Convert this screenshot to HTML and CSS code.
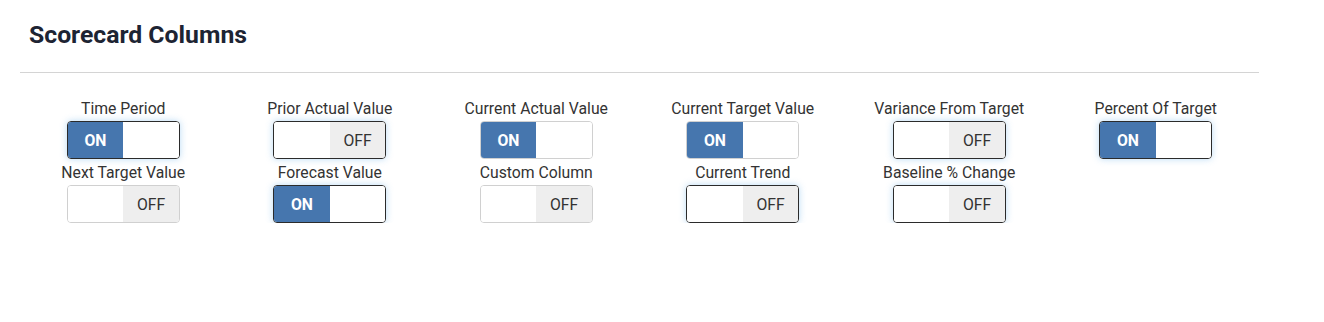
FILE: index.html
```html
<!DOCTYPE html>
<html>
<head>
    <title>Scorecard Columns</title>
    <link rel="stylesheet" href="styles.css">
</head>
<body>
    <div id="container">
        <h1 class="titulo">Scorecard Columns</h1>
        <hr class="divisor">

        <div class="grade">
            <div class="campo">
                <label>Time Period</label>
                <div class="chave ligada focada"><span class="lado-on">ON</span><span class="lado-vazio"></span></div>
            </div>
            <div class="campo">
                <label>Prior Actual Value</label>
                <div class="chave focada"><span class="lado-vazio"></span><span class="lado-off">OFF</span></div>
            </div>
            <div class="campo">
                <label>Current Actual Value</label>
                <div class="chave ligada"><span class="lado-on">ON</span><span class="lado-vazio"></span></div>
            </div>
            <div class="campo">
                <label>Current Target Value</label>
                <div class="chave ligada"><span class="lado-on">ON</span><span class="lado-vazio"></span></div>
            </div>
            <div class="campo">
                <label>Variance From Target</label>
                <div class="chave focada"><span class="lado-vazio"></span><span class="lado-off">OFF</span></div>
            </div>
            <div class="campo">
                <label>Percent Of Target</label>
                <div class="chave ligada focada"><span class="lado-on">ON</span><span class="lado-vazio"></span></div>
            </div>

            <div class="campo">
                <label>Next Target Value</label>
                <div class="chave"><span class="lado-vazio"></span><span class="lado-off">OFF</span></div>
            </div>
            <div class="campo">
                <label>Forecast Value</label>
                <div class="chave ligada focada"><span class="lado-on">ON</span><span class="lado-vazio"></span></div>
            </div>
            <div class="campo">
                <label>Custom Column</label>
                <div class="chave"><span class="lado-vazio"></span><span class="lado-off">OFF</span></div>
            </div>
            <div class="campo">
                <label>Current Trend</label>
                <div class="chave focada"><span class="lado-vazio"></span><span class="lado-off">OFF</span></div>
            </div>
            <div class="campo">
                <label>Baseline % Change</label>
                <div class="chave focada"><span class="lado-vazio"></span><span class="lado-off">OFF</span></div>
            </div>
        </div>
    </div>
</body>
</html>
```

FILE: styles.css
```css
body {
    background-color: #ffffff;
    color: #333333;
    font-family: Roboto, "Liberation Sans", Arial, sans-serif;
    margin: 0;
}
#container {
    width: 1239px;
    padding: 0 0 0 20px;
}
.titulo {
    font-size: 24.75px;
    font-weight: 700;
    color: #1d2433;
    margin: 0;
    padding: 20px 0 0 9px;
    line-height: 29px;
}
.divisor {
    border: none;
    border-top: 1px solid #d4d4d4;
    margin: 23px 0 0 0;
}
.grade {
    display: grid;
    grid-template-columns: repeat(6, 1fr);
    row-gap: 5px;
    margin-top: 27px;
}
.campo {
    display: flex;
    flex-direction: column;
    align-items: center;
}
label {
    font-size: 15.75px;
    line-height: 18px;
    color: #333333;
    margin-bottom: 3px;
}
.chave {
    display: flex;
    width: 113px;
    height: 38px;
    box-sizing: border-box;
    border: 1px solid #d0d0d0;
    border-radius: 4px;
    overflow: hidden;
    font-size: 15.75px;
}
.chave.focada {
    border-color: #2b2b2b;
    box-shadow: 0 0 7px rgba(102, 175, 233, 0.45);
}
.chave span {
    flex: 1;
    display: flex;
    align-items: center;
    justify-content: center;
}
.lado-on {
    background-color: #4676ae; /* azul */
    color: #ffffff;
    font-weight: 700;
}
.lado-off {
    background-color: #eeeeee;
    color: #333333;
}
.lado-vazio {
    background-color: #ffffff;
}
```
